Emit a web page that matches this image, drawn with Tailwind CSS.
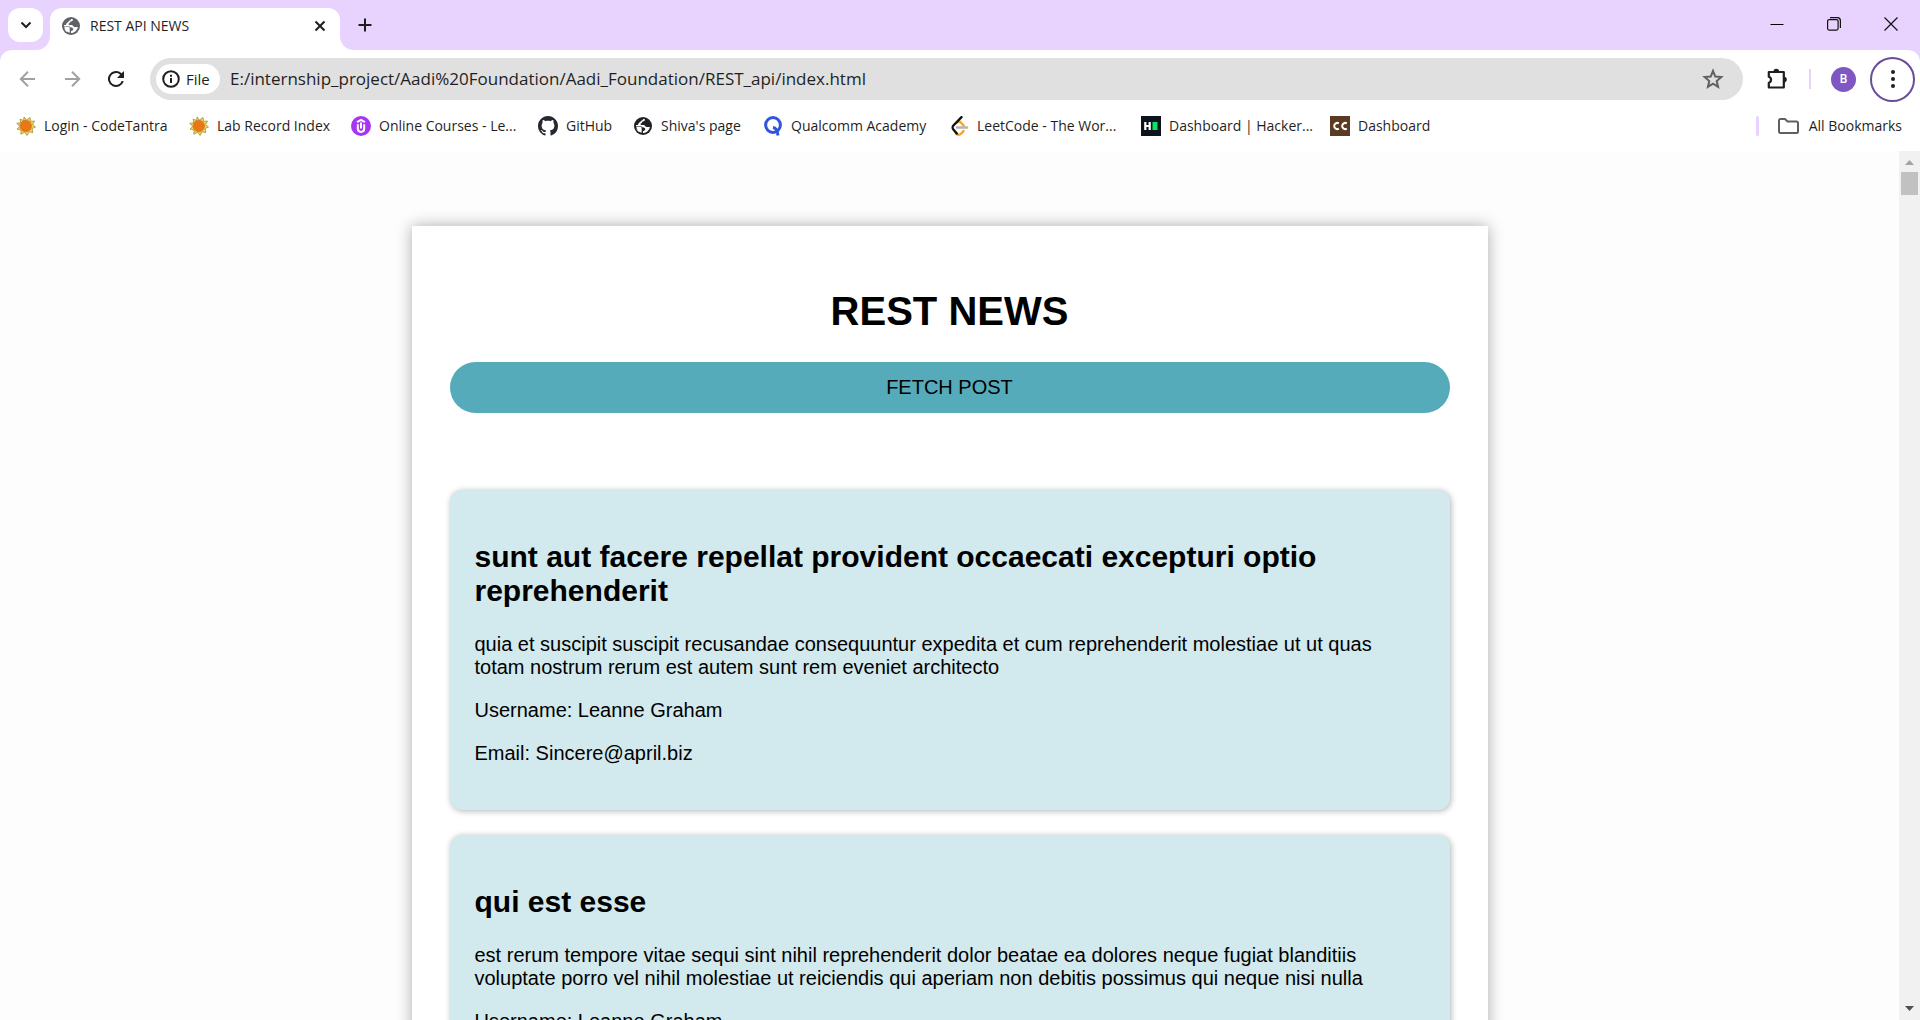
<!DOCTYPE html>
<html lang="en">
<head>
<meta charset="utf-8">
<title>REST API NEWS</title>
<script src="https://cdn.jsdelivr.net/npm/@tailwindcss/browser@4"></script>
</head>
<body class="h-screen overflow-hidden flex flex-col bg-white text-[#1f1f1f] font-['Segoe_UI','Open_Sans',sans-serif]">
<svg class="hidden">
  <symbol id="globe" viewBox="0 0 18 18">
    <circle cx="9" cy="9" r="9" fill="currentColor"/>
    <path d="M10.500 2c.8 1.200.2 2-1 2.300-1.600.3-1.300 1.500-2.300 1.900-1 .5-1 1.800.2 1.800h2.400c1.200 0 1.300 1.900 2.600 1.900h3.500c-.6 3.300-3.400 6-6.900 6.100v-1.800c1.400-.2 2.200-1 2.200-2.100 0-1.200-.9-1.700-2-1.700-1.300 0-1.300-1.200-2.500-1.200H2c0 2.600 1.300 4.800 3.300 6L5 14c-2-1.300-3.200-3-3-5.500C2.200 5 5.200 1.900 9 1.900z" fill="#fff"/>
    <path d="M1.500 8C1.800 4.500 5 1.500 8 1.500c1.400 0 1.200 1.400.3 1.700-1.800.5-1.300 1.500-2.600 2C4.300 5.800 4 8 4 8z" fill="currentColor"/>
    <path d="M2.300 9.800h3.800c1.200 0 1.600.7 1.600 1.700v4.300C4.900 15.400 2.700 13 2.300 9.800z" fill="#fff"/>
  </symbol>
  <symbol id="sun" viewBox="0 0 20 20">
    <path d="M8 1l2.500 3L14 1.500l.6 3.800 4-.2-2 3.400 2.900 2.500-3.500 1.600.9 3.900-3.800-.7-2 3.700-2.500-3.200-3.800 1.900.3-3.900L1 12.900l2.800-2.400L.8 7.300l3.900-.6L4.100 3l3.500 1.600z" fill="#ead55c" stroke="#a59136" stroke-width=".8"/>
    <circle cx="9.800" cy="10" r="5.700" fill="#e87817" stroke="#cf6a1c" stroke-width=".6"/>
  </symbol>
</svg>

<header class="shrink-0 bg-[#e8d3ff]">
  <div class="flex h-[50px] items-start pt-2 pl-2">
    <button aria-label="Search tabs" class="flex h-[34px] w-[35px] items-center justify-center rounded-xl bg-white">
      <svg class="size-3" viewBox="0 0 12 12" fill="none" stroke="#1f1f1f" stroke-width="2"><path d="M1.500 3.500 6 8l4.500-4.500"/></svg>
    </button>
    <div class="relative ml-[7px] flex h-[42px] w-[290px] items-center rounded-t-xl bg-white pl-3 pr-2.5 pb-4 pt-3.5">
      <svg class="absolute -left-3.5 bottom-0 size-3.5" viewBox="0 0 14 14"><path d="M14 0v14H0C8 14 14 8 14 0z" fill="#fff"/></svg>
      <svg class="absolute -right-3.5 bottom-0 size-3.5" viewBox="0 0 14 14"><path d="M0 0v14h14C6 14 0 8 0 0z" fill="#fff"/></svg>
      <svg class="size-[18px] -mt-1 text-[#5f6368]"><use href="#globe"/></svg>
      <span class="-mt-1 ml-2.5 flex-1 text-sm">REST API NEWS</span>
      <button aria-label="Close tab" class="-mt-1 p-1"><svg class="size-3" viewBox="0 0 12 12" stroke="#1f1f1f" stroke-width="2"><path d="m1.500 1.500 9 9m0-9-9 9"/></svg></button>
    </div>
    <button aria-label="New tab" class="ml-[17px] flex h-[34px] w-4 items-center justify-center"><svg class="size-3.5" viewBox="0 0 14 14" stroke="#1f1f1f" stroke-width="2"><path d="M7 .5v13M.5 7h13"/></svg></button>
    <div class="ml-auto flex h-8 items-center gap-[43px] pr-[22px]">
      <button aria-label="Minimize"><svg class="size-3.5" viewBox="0 0 14 14" stroke="#000"><path d="M.5 7.500h13"/></svg></button>
      <button aria-label="Restore"><svg class="size-3.5" viewBox="0 0 14 14" fill="none" stroke="#111" stroke-width="1.200"><rect x=".6" y="2.600" width="10.500" height="10.500" rx="1.500"/><path d="M3 .7h7.500a3 3 0 0 1 2.900 3V11"/></svg></button>
      <button aria-label="Close"><svg class="size-3.5" viewBox="0 0 14 14" stroke="#111" stroke-width="1.200"><path d="m.5.5 13 13m0-13-13 13"/></svg></button>
    </div>
  </div>

  <div class="rounded-t-xl bg-white">
    <div class="flex h-[58px] items-center pl-4 pr-[5px]">
      <nav class="flex items-center gap-5" aria-label="Navigation">
        <button aria-label="Back"><svg class="size-6" viewBox="0 0 24 24" fill="none" stroke="#a1a1a1" stroke-width="2"><path d="M19 12H5m7-7.200L4.800 12l7.200 7.200"/></svg></button>
        <button aria-label="Forward"><svg class="size-6" viewBox="0 0 24 24" fill="none" stroke="#a1a1a1" stroke-width="2"><path d="M5 12h14m-7-7.200 7.200 7.200-7.200 7.200"/></svg></button>
        <button aria-label="Reload"><svg class="size-6" viewBox="0 0 24 24" fill="#1f1f1f"><path d="M17.650 6.350A8 8 0 1 0 19.730 14h-2.080A6 6 0 1 1 12 6c1.660 0 3.140.69 4.220 1.780L13 11h7V4z"/></svg></button>
      </nav>
      <form class="ml-[22px] flex h-[42px] flex-1 items-center rounded-full bg-[#e0e0e0] pl-1.5 pr-4">
        <button type="button" class="flex h-[30px] w-16 items-center gap-1.5 rounded-full bg-white pl-1.5 text-[15px] font-medium">
          <svg class="size-[18px]" viewBox="0 0 18 18" fill="none" stroke="#1f1f1f" stroke-width="2"><circle cx="9" cy="9" r="7.800"/><path d="M9 8v5M9 4.800v2"/></svg>File
        </button>
        <input aria-label="Address" class="ml-2.5 min-w-0 flex-1 bg-transparent text-[17px] outline-none" value="E:/internship_project/Aadi%20Foundation/Aadi_Foundation/REST_api/index.html">
        <button type="button" aria-label="Bookmark this page"><svg class="size-7" viewBox="0 0 28 28" fill="none" stroke="#5f6063" stroke-width="2"><path d="m14 6 2.300 5.600 6 .5-4.600 3.900 1.400 5.900-5.100-3.200-5.100 3.200 1.400-5.900-4.600-3.900 6-.5z"/></svg></button>
      </form>
      <div class="flex items-center">
        <button aria-label="Extensions" class="ml-[22px]"><svg class="size-6" viewBox="0 0 24 24"><path d="M3.800 5h15v15.500h-15v-4.800c3-.9 3-5 0-5.900z" fill="none" stroke="#1f1f1f" stroke-width="2.200" stroke-linejoin="round"/><path d="M8.500 4.500a2.800 2.800 0 0 1 5.600 0zM19 9.800a2.800 2.800 0 0 1 0 5.600z" fill="#1f1f1f"/></svg></button>
        <span class="ml-5 h-5 w-0.5 bg-[#e8d3ff]"></span>
        <button aria-label="Profile" class="ml-5 size-[25px] rounded-full bg-[#7e57c2] font-[Roboto] text-xs font-medium text-white">B</button>
        <button aria-label="Menu" class="ml-3.5 flex size-[45px] items-center justify-center rounded-full border-2 border-[#6b4c96]"><svg class="h-5 w-1" viewBox="0 0 4 20" fill="#1f1f1f"><circle cx="2" cy="3" r="2"/><circle cx="2" cy="10" r="2"/><circle cx="2" cy="17" r="2"/></svg></button>
      </div>
    </div>

    <nav class="flex h-[43px] items-start pl-4 pr-[18px] pt-2 text-sm" aria-label="Bookmarks">
      <a href="#" class="flex w-[173px] items-center gap-2"><svg class="size-5"><use href="#sun"/></svg>Login - CodeTantra</a>
      <a href="#" class="flex w-[162px] items-center gap-2"><svg class="size-5"><use href="#sun"/></svg>Lab Record Index</a>
      <a href="#" class="flex w-[187px] items-center gap-2"><svg class="size-5" viewBox="0 0 20 20"><circle cx="10" cy="10" r="10" fill="#a435f0"/><path d="m6 6.200 4-2.400 4 2.400M6.800 8.300v4.200c0 4.500 6.400 4.500 6.400 0V8.300M10 6.500v6" fill="none" stroke="#fff" stroke-width="2"/></svg>Online Courses - Le...</a>
      <a href="#" class="flex w-[95px] items-center gap-2"><svg class="size-5" viewBox="0 0 16 16" fill="#24292f"><path d="M8 0C3.580 0 0 3.580 0 8c0 3.540 2.290 6.530 5.470 7.590.4.070.55-.17.55-.38 0-.19-.01-.82-.01-1.490-2.010.37-2.530-.49-2.690-.94-.09-.23-.48-.94-.82-1.130-.28-.15-.68-.52-.01-.53.63-.01 1.080.58 1.230.82.72 1.210 1.870.87 2.330.66.070-.52.28-.87.51-1.070-1.780-.2-3.640-.89-3.640-3.950 0-.87.31-1.590.82-2.150-.08-.2-.36-1.020.08-2.120 0 0 .67-.21 2.200.82.64-.18 1.320-.27 2-.27s1.360.09 2 .27c1.530-1.040 2.200-.82 2.200-.82.44 1.100.16 1.920.08 2.120.51.56.82 1.270.82 2.150 0 3.070-1.870 3.750-3.650 3.950.29.25.54.73.54 1.480 0 1.070-.01 1.930-.01 2.200 0 .21.15.46.55.38A8.010 8.010 0 0 0 16 8c0-4.420-3.580-8-8-8z"/></svg>GitHub</a>
      <a href="#" class="flex w-[130px] items-center gap-2"><svg class="h-[18px] w-5 text-[#202124]"><use href="#globe"/></svg>Shiva's page</a>
      <a href="#" class="flex w-[186px] items-center gap-2"><svg class="size-5" viewBox="0 0 20 20" fill="none" stroke="#3253dc" stroke-width="3"><circle cx="10" cy="9" r="7.400"/><path d="M10 11.500c3.500.3 4.500 3 5 8"/></svg>Qualcomm Academy</a>
      <a href="#" class="flex w-[192px] items-center gap-2"><svg class="size-5" viewBox="0 0 20 20" fill="none" stroke-width="2.400" stroke-linecap="round"><path d="M8 11.500h10" stroke="#b3b3b3"/><path d="m8.500 6.500 2.200-1 4 4M14.500 15l-2.200 2.500c-1.500 1.700-4 1.700-5.500 0" stroke="#ffa116"/><path d="M12.500 1.200 4.400 9.500c-1 1-1 3 0 4l3.400 4" stroke="#111"/></svg>LeetCode - The Wor...</a>
      <a href="#" class="flex w-[189px] items-center gap-2"><svg class="size-5" viewBox="0 0 20 20"><path fill="#0e141e" d="M0 0h20v20H0z"/><path d="M4.300 6v8M8.700 6v8M4 10h5" stroke="#fff" stroke-width="2.200"/><path fill="#05e662" d="M11.500 6h5v8h-5z"/></svg>Dashboard | Hacker...</a>
      <a href="#" class="flex items-center gap-2"><svg class="size-5" viewBox="0 0 20 20"><path fill="#5b3922" d="M0 0h20v20H0z"/><path d="M8.800 7.300a3.100 3.100 0 1 0 0 5.400M16.800 7.300a3.100 3.100 0 1 0 0 5.400" fill="none" stroke="#fff" stroke-width="2"/></svg>Dashboard</a>
      <span class="ml-auto h-5 w-[3px] rounded-sm bg-[#e8d3ff]"></span>
      <a href="#" class="ml-[19px] flex items-center gap-2.5"><svg class="h-5 w-[21px]" viewBox="0 0 21 20" fill="none" stroke="#5f6063" stroke-width="2" stroke-linejoin="round"><path d="M1 4.500c0-1 .5-1.500 1.500-1.500H7l2.500 2.500h9c1 0 1.500.5 1.500 1.500v8.500c0 1-.5 1.500-1.500 1.500h-16c-1 0-1.500-.5-1.500-1.500z"/></svg>All Bookmarks</a>
    </nav>
  </div>
</header>

<div class="flex min-h-0 flex-1">
  <div class="min-w-0 flex-1 overflow-hidden bg-[#fdfdfd] pt-[75px] text-black font-[Arial,'Liberation_Sans',sans-serif]">
    <main class="mx-auto w-full max-w-[1076px] bg-white px-[38px] pt-[62px] shadow-[0_0_15px_rgba(0,0,0,0.32)]">
      <h1 class="text-center text-[40px] leading-[46px] font-bold">REST NEWS</h1>
      <button class="mt-7 h-[51px] w-full rounded-full bg-[#56abbb] pb-0.5 text-xl">FETCH POST</button>
      <div class="mt-[77px] flex flex-col gap-[25px] text-xl leading-[23px]">
        <article class="flex flex-col gap-5 rounded-xl bg-[#d2e9ed] px-[25px] pb-[45px] pt-[50px] shadow-[1px_1px_6px_rgba(0,0,0,0.3)]">
          <h2 class="mb-[5px] text-[30px] leading-[34px] font-bold">sunt aut facere repellat provident occaecati excepturi optio reprehenderit</h2>
          <p>quia et suscipit suscipit recusandae consequuntur expedita et cum reprehenderit molestiae ut ut quas totam nostrum rerum est autem sunt rem eveniet architecto</p>
          <p>Username: Leanne Graham</p>
          <p>Email: Sincere@april.biz</p>
        </article>
        <article class="flex flex-col gap-5 rounded-xl bg-[#d2e9ed] px-[25px] pb-[45px] pt-[50px] shadow-[1px_1px_6px_rgba(0,0,0,0.3)]">
          <h2 class="mb-[5px] text-[30px] leading-[34px] font-bold">qui est esse</h2>
          <p>est rerum tempore vitae sequi sint nihil reprehenderit dolor beatae ea dolores neque fugiat blanditiis voluptate porro vel nihil molestiae ut reiciendis qui aperiam non debitis possimus qui neque nisi nulla</p>
          <p>Username: Leanne Graham</p>
          <p>Email: Sincere@april.biz</p>
        </article>
      </div>
    </main>
  </div>
  <div class="flex w-[21px] shrink-0 flex-col items-center bg-[#f1f1f1]">
    <svg class="h-[21px] w-[9px] shrink-0" viewBox="0 0 9 21" fill="#a3a3a3"><path d="M4.500 9 9 14H0z"/></svg>
    <div class="h-[23px] w-[17px] bg-[#c1c1c1]"></div>
    <svg class="mt-auto h-[21px] w-[9px] shrink-0" viewBox="0 0 9 21" fill="#505050"><path d="M4.500 12 9 7H0z"/></svg>
  </div>
</div>
</body>
</html>
